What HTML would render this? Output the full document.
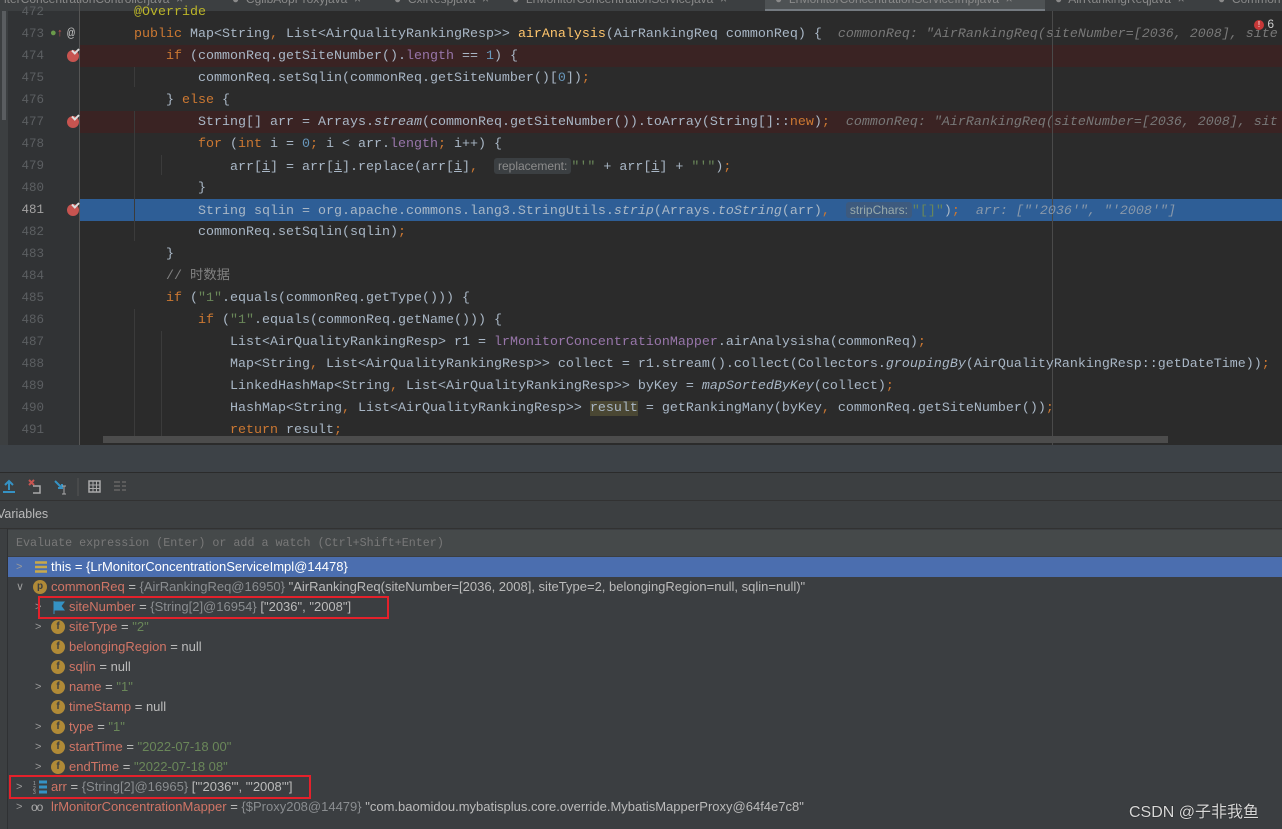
<!DOCTYPE html>
<html><head><meta charset="utf-8"><style>
*{margin:0;padding:0;box-sizing:border-box}
body{width:1282px;height:829px;overflow:hidden;background:#2b2b2b;position:relative;font-family:"Liberation Mono",monospace}
.abs{position:absolute}
.ln{position:absolute;left:0;width:1282px;height:22px;line-height:23px;font-size:13.33px;white-space:pre;color:#a9b7c6}
.num{position:absolute;left:8px;width:36px;text-align:right;color:#5c5f62;font-size:12.5px}
.code{position:absolute;left:102px}
.k{color:#cc7832}.m{color:#ffc66d}.n{color:#6897bb}.s{color:#6a8759}.f{color:#9876aa}.c{color:#808080}.i{font-style:italic}
.h{color:#787878;font-style:italic}
.hint{background:#3b3f42;color:#8c8c8c;font-family:"Liberation Sans",sans-serif;font-size:12px;padding:1px 4px;border-radius:3px}
.bp{position:absolute;left:67px;top:5px;width:12px;height:12px;border-radius:50%;background:#c75450}
.bp:after{content:"";position:absolute;left:5px;top:-2px;width:5px;height:3px;border-left:2px solid #ddd;border-bottom:2px solid #ddd;transform:rotate(-45deg)}
.tr{position:absolute;left:0;width:1282px;height:20px;line-height:20px;font-family:"Liberation Sans",sans-serif;font-size:13px;white-space:pre;color:#bbbbbb}
.chev{position:absolute;color:#9a9a9a;font-size:11px}
.fi{position:absolute;top:3px;width:14px;height:14px;border-radius:50%;background:#b08a37;color:#3c3f41;font-size:10px;line-height:14px;text-align:center;font-weight:bold}
.vn{color:#d07566}.g{color:#8a8d90}.st{color:#6a8759}
</style></head><body>
<div class="abs" style="left:0;top:0;width:8px;height:445px;background:#3c3f41"></div>
<div class="abs" style="left:2px;top:10px;width:4px;height:110px;background:#5a5d60"></div>
<div class="abs" style="left:8px;top:0;width:71px;height:445px;background:#313335"></div>
<div class="abs" style="left:0;top:0;width:1282px;height:11px;background:#3c3f41;font-family:'Liberation Sans',sans-serif;font-size:12px;color:#8a8a8a;overflow:hidden;white-space:pre">
<div class="abs" style="left:765px;top:0;width:280px;height:11px;background:#4e5254"></div>
<div class="abs" style="left:765px;top:9px;width:280px;height:2px;background:#747a80"></div>
<div class="abs" style="left:4px;top:-8px">iterConcentrationControllerjava  ×</div>
<div class="abs" style="left:232px;top:-8px">●  CglibAopProxyjava  ×</div>
<div class="abs" style="left:394px;top:-8px">●  CxlRespjava  ×</div>
<div class="abs" style="left:512px;top:-8px">●  LrMonitorConcentrationServicejava  ×</div>
<div class="abs" style="left:775px;top:-8px">●  LrMonitorConcentrationServiceImpljava  ×</div>
<div class="abs" style="left:1055px;top:-8px">●  AirRankingReqjava  ×</div>
<div class="abs" style="left:1218px;top:-8px">●  Common</div>
</div>
<div class="abs" style="left:79px;top:45px;width:1203px;height:22px;background:#3a2323"></div>
<div class="abs" style="left:79px;top:111px;width:1203px;height:22px;background:#3a2323"></div>
<div class="abs" style="left:79px;top:199px;width:1203px;height:22px;background:#2e5e96"></div>
<div class="abs" style="left:79px;top:0;width:1px;height:445px;background:#555"></div>
<div class="abs" style="left:1052px;top:11px;width:1px;height:434px;background:#4a4a4a"></div>
<div class="abs" style="left:134px;top:67px;width:1px;height:20px;background:#3b3b3b"></div>
<div class="abs" style="left:134px;top:111px;width:1px;height:130px;background:#3b3b3b"></div>
<div class="abs" style="left:161px;top:155px;width:1px;height:20px;background:#3b3b3b"></div>
<div class="abs" style="left:134px;top:309px;width:1px;height:130px;background:#3b3b3b"></div>
<div class="abs" style="left:161px;top:331px;width:1px;height:110px;background:#3b3b3b"></div>

<div class="ln" style="top:1px"><span class="num">472</span><span class="code" style="left:134px;color:#bbb529">@Override</span></div>
<div class="ln" style="top:23px"><span class="num">473</span><span class="abs" style="left:50px;color:#6a9a4a;font-size:11px">●<span style="color:#c75450">↑</span></span><span class="abs" style="left:67px;color:#bbb">@</span><span class="code" style="left:134px"><span class="k">public </span>Map&lt;String<span class="k">, </span>List&lt;AirQualityRankingResp&gt;&gt; <span class="m">airAnalysis</span>(AirRankingReq commonReq) {  <span class="h">commonReq: "AirRankingReq(siteNumber=[2036, 2008], site</span></span></div>
<div class="ln" style="top:45px"><span class="num">474</span><span class="bp"></span><span class="code" style="left:166px"><span class="k">if </span>(commonReq.getSiteNumber().<span class="f">length</span> == <span class="n">1</span>) {</span></div>
<div class="ln" style="top:67px"><span class="num">475</span><span class="code" style="left:198px">commonReq.setSqlin(commonReq.getSiteNumber()[<span class="n">0</span>])<span class="k">;</span></span></div>
<div class="ln" style="top:89px"><span class="num">476</span><span class="code" style="left:166px">} <span class="k">else </span>{</span></div>
<div class="ln" style="top:111px"><span class="num">477</span><span class="bp"></span><span class="code" style="left:198px">String[] arr = Arrays.<span class="i">stream</span>(commonReq.getSiteNumber()).toArray(String[]::<span class="k">new</span>)<span class="k">;</span>  <span class="h">commonReq: "AirRankingReq(siteNumber=[2036, 2008], sit</span></span></div>
<div class="ln" style="top:133px"><span class="num">478</span><span class="code" style="left:198px"><span class="k">for </span>(<span class="k">int </span>i = <span class="n">0</span><span class="k">; </span>i &lt; arr.<span class="f">length</span><span class="k">; </span>i++) {</span></div>
<div class="ln" style="top:155px"><span class="num">479</span><span class="code" style="left:230px">arr[<u>i</u>] = arr[<u>i</u>].replace(arr[<u>i</u>]<span class="k">,</span>  <span class="hint">replacement:</span><span class="s">"'"</span> + arr[<u>i</u>] + <span class="s">"'"</span>)<span class="k">;</span></span></div>
<div class="ln" style="top:177px"><span class="num">480</span><span class="code" style="left:198px">}</span></div>
<div class="ln" style="top:199px"><span class="num" style="color:#a4a3a3">481</span><span class="bp"></span><span class="code" style="left:198px">String sqlin = org.apache.commons.lang3.StringUtils.<span class="i">strip</span>(Arrays.<span class="i">toString</span>(arr)<span class="k">,</span>  <span class="hint" style="background:#3d5a7e;color:#9aa">stripChars:</span><span class="s">"[]"</span>)<span class="k">;</span>  <span class="h" style="color:#8898aa">arr: ["'2036'", "'2008'"]</span></span></div>
<div class="ln" style="top:221px"><span class="num">482</span><span class="code" style="left:198px">commonReq.setSqlin(sqlin)<span class="k">;</span></span></div>
<div class="ln" style="top:243px"><span class="num">483</span><span class="code" style="left:166px">}</span></div>
<div class="ln" style="top:265px"><span class="num">484</span><span class="code c" style="left:166px;font-family:'Liberation Mono','Noto Sans CJK SC',monospace">// 时数据</span></div>
<div class="ln" style="top:287px"><span class="num">485</span><span class="code" style="left:166px"><span class="k">if </span>(<span class="s">"1"</span>.equals(commonReq.getType())) {</span></div>
<div class="ln" style="top:309px"><span class="num">486</span><span class="code" style="left:198px"><span class="k">if </span>(<span class="s">"1"</span>.equals(commonReq.getName())) {</span></div>
<div class="ln" style="top:331px"><span class="num">487</span><span class="code" style="left:230px">List&lt;AirQualityRankingResp&gt; r1 = <span class="f">lrMonitorConcentrationMapper</span>.airAnalysisha(commonReq)<span class="k">;</span></span></div>
<div class="ln" style="top:353px"><span class="num">488</span><span class="code" style="left:230px">Map&lt;String<span class="k">, </span>List&lt;AirQualityRankingResp&gt;&gt; collect = r1.stream().collect(Collectors.<span class="i">groupingBy</span>(AirQualityRankingResp::getDateTime))<span class="k">;</span></span></div>
<div class="ln" style="top:375px"><span class="num">489</span><span class="code" style="left:230px">LinkedHashMap&lt;String<span class="k">, </span>List&lt;AirQualityRankingResp&gt;&gt; byKey = <span class="i">mapSortedByKey</span>(collect)<span class="k">;</span></span></div>
<div class="ln" style="top:397px"><span class="num">490</span><span class="code" style="left:230px">HashMap&lt;String<span class="k">, </span>List&lt;AirQualityRankingResp&gt;&gt; <span style="background:#4a4733">result</span> = getRankingMany(byKey<span class="k">, </span>commonReq.getSiteNumber())<span class="k">;</span></span></div>
<div class="ln" style="top:419px"><span class="num">491</span><span class="code" style="left:230px"><span class="k">return </span>result<span class="k">;</span></span></div>
<div class="abs" style="left:1254px;top:17px;font-family:'Liberation Sans',sans-serif;font-size:12px;color:#ccc"><span style="display:inline-block;width:10px;height:10px;border-radius:50%;background:#c73838;color:#fff;font-size:8px;text-align:center;line-height:10px;vertical-align:1px">!</span> 6</div>
<div class="abs" style="left:103px;top:436px;width:1065px;height:7px;background:#4c4c4c"></div>

<div class="abs" style="left:0;top:445px;width:1282px;height:384px;background:#3c3f41"></div>
<div class="abs" style="left:0;top:445px;width:1282px;height:27px;background:#3d4247"></div>
<div class="abs" style="left:0;top:472px;width:1282px;height:1px;background:#2b2b2b"></div>
<svg class="abs" style="left:0;top:476px" width="140" height="22">
<path d="M9 5v9M5 9l4-4 4 4" stroke="#3592c4" stroke-width="2" fill="none"/><rect x="3" y="15" width="12" height="2" fill="#3592c4"/>
<path d="M29 4l5 5M34 4l-5 5" stroke="#c75450" stroke-width="2"/><path d="M33 10h7v7h-7" stroke="#aaa" fill="none" stroke-width="1.5"/>
<path d="M55 5l7 7M62 8v4h-4" stroke="#3592c4" stroke-width="2" fill="none"/><path d="M64 10v8M62 10h4M62 18h4" stroke="#aaa"/>
<line x1="78" y1="2" x2="78" y2="20" stroke="#555"/>
<rect x="89" y="5" width="11" height="11" fill="none" stroke="#aaa" stroke-width="1.5"/><path d="M89 9h11M89 12.5h11M93 5v11M96.5 5v11" stroke="#aaa"/>
<path d="M114 6h6M114 10h6M114 14h6M122 6h4M122 10h4M122 14h4" stroke="#666" stroke-width="1.5"/>
</svg>
<div class="abs" style="left:0;top:500px;width:1282px;height:1px;background:#323232"></div>
<div class="abs" style="left:-3px;top:507px;font-family:'Liberation Sans',sans-serif;font-size:12.5px;color:#bbb">Variables</div>
<div class="abs" style="left:0;top:528px;width:1282px;height:1px;background:#323232"></div>
<div class="abs" style="left:8px;top:529px;width:1274px;height:300px;background:#3b3e41"></div>
<div class="abs" style="left:0;top:529px;width:8px;height:300px;background:#3c3f41;border-right:1px solid #2f3133"></div>
<div class="abs" style="left:8px;top:530px;width:1274px;height:26px;background:#45494a;font-size:11.7px;line-height:26px;color:#787878;padding-left:8px">Evaluate expression (Enter) or add a watch (Ctrl+Shift+Enter)</div>

<div class="tr" style="top:557px;left:8px;background:#4b6eaf;color:#fff"><span class="chev" style="left:8px">&gt;</span><svg class="abs" style="left:27px;top:4px" width="12" height="12"><path d="M0 1.5h12M0 6h12M0 10.5h12" stroke="#c9a94a" stroke-width="2.5"/></svg><span class="abs" style="left:43px">this = {LrMonitorConcentrationServiceImpl@14478}</span></div>
<div class="tr" style="top:577px"><span class="chev" style="left:16px">∨</span><span class="fi" style="left:33px">p</span><span class="abs" style="left:51px"><span class="vn">commonReq</span> = <span class="g">{AirRankingReq@16950}</span> "AirRankingReq(siteNumber=[2036, 2008], siteType=2, belongingRegion=null, sqlin=null)"</span></div>
<div class="tr" style="top:597px"><span class="chev" style="left:35px">&gt;</span><svg class="abs" style="left:53px;top:4px" width="12" height="13"><path d="M1 0v13M1 1h10l-3 4 3 4H1z" fill="#3592c4" stroke="#3592c4"/></svg><span class="abs" style="left:69px"><span class="vn">siteNumber</span> = <span class="g">{String[2]@16954}</span> ["2036", "2008"]</span></div>
<div class="tr" style="top:617px"><span class="chev" style="left:35px">&gt;</span><span class="fi" style="left:51px">f</span><span class="abs" style="left:69px"><span class="vn">siteType</span> = <span class="st">"2"</span></span></div>
<div class="tr" style="top:637px"><span class="fi" style="left:51px">f</span><span class="abs" style="left:69px"><span class="vn">belongingRegion</span> = null</span></div>
<div class="tr" style="top:657px"><span class="fi" style="left:51px">f</span><span class="abs" style="left:69px"><span class="vn">sqlin</span> = null</span></div>
<div class="tr" style="top:677px"><span class="chev" style="left:35px">&gt;</span><span class="fi" style="left:51px">f</span><span class="abs" style="left:69px"><span class="vn">name</span> = <span class="st">"1"</span></span></div>
<div class="tr" style="top:697px"><span class="fi" style="left:51px">f</span><span class="abs" style="left:69px"><span class="vn">timeStamp</span> = null</span></div>
<div class="tr" style="top:717px"><span class="chev" style="left:35px">&gt;</span><span class="fi" style="left:51px">f</span><span class="abs" style="left:69px"><span class="vn">type</span> = <span class="st">"1"</span></span></div>
<div class="tr" style="top:737px"><span class="chev" style="left:35px">&gt;</span><span class="fi" style="left:51px">f</span><span class="abs" style="left:69px"><span class="vn">startTime</span> = <span class="st">"2022-07-18 00"</span></span></div>
<div class="tr" style="top:757px"><span class="chev" style="left:35px">&gt;</span><span class="fi" style="left:51px">f</span><span class="abs" style="left:69px"><span class="vn">endTime</span> = <span class="st">"2022-07-18 08"</span></span></div>
<div class="tr" style="top:777px"><span class="chev" style="left:16px">&gt;</span><svg class="abs" style="left:33px;top:3px" width="14" height="14"><path d="M6 2h8M6 7h8M6 12h8" stroke="#3592c4" stroke-width="3"/><text x="0" y="5" font-size="5" fill="#aaa">1</text><text x="0" y="10" font-size="5" fill="#aaa">2</text><text x="0" y="14" font-size="5" fill="#aaa">3</text></svg><span class="abs" style="left:51px"><span class="vn">arr</span> = <span class="g">{String[2]@16965}</span> ["'2036'", "'2008'"]</span></div>
<div class="tr" style="top:797px"><span class="chev" style="left:16px">&gt;</span><span class="abs" style="left:31px;color:#aaa;font-size:12px;letter-spacing:-1px">oo</span><span class="abs" style="left:51px"><span class="vn">lrMonitorConcentrationMapper</span> = <span class="g">{$Proxy208@14479}</span> "com.baomidou.mybatisplus.core.override.MybatisMapperProxy@64f4e7c8"</span></div>
<div class="abs" style="left:38px;top:596px;width:351px;height:23px;border:2px solid #e4212b"></div>
<div class="abs" style="left:9px;top:775px;width:302px;height:24px;border:2px solid #e4212b"></div>
<div class="abs" style="left:1129px;top:798px;font-family:'Liberation Sans','Noto Sans CJK SC',sans-serif;font-size:16px;color:#d8d8d8;text-shadow:0 0 1px #000">CSDN @子非我鱼</div>
</body></html>
